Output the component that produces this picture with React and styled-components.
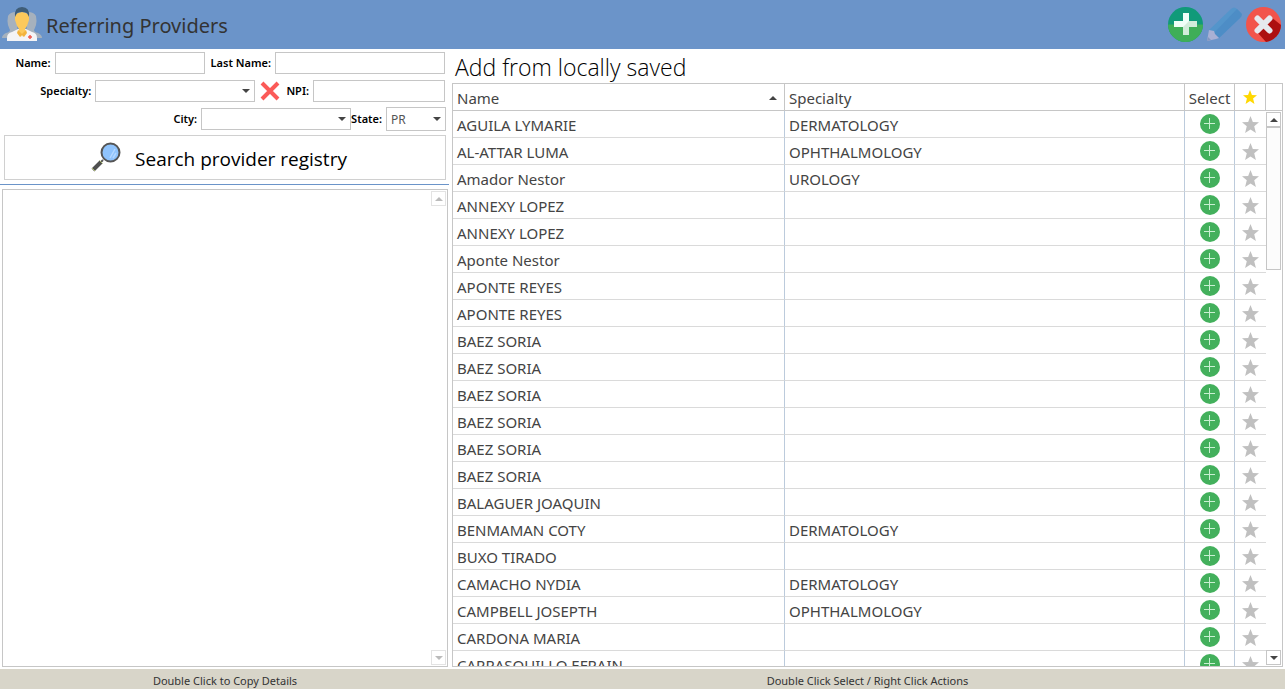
import React from 'react';
import styled, { createGlobalStyle } from 'styled-components';

const GlobalStyle = createGlobalStyle`
  * {
    box-sizing: border-box;
  }
  body {
    margin: 0;
    background: #fff;
    color: #444;
    font-family: 'Noto Sans', 'Open Sans', sans-serif;
    font-size: 15px;
  }
  button, input, select {
    font-family: inherit;
  }
`;

const Page = styled.div`
  height: 100vh;
  display: flex;
  flex-direction: column;
  overflow: hidden;
`;

const Header = styled.header`
  flex: none;
  height: 49px;
  padding: 0 4px 0 2px;
  display: flex;
  align-items: center;
  background: #6b94c9;
`;

const Title = styled.h1`
  flex: 1;
  margin: 0 0 0 4px;
  font-size: 20px;
  line-height: 28px;
  padding-top: 2px;
  font-weight: 400;
  color: #333;
`;

const Toolbar = styled.div`
  display: flex;
  gap: 4px;
`;

const IconButton = styled.button`
  display: flex;
  align-items: center;
  justify-content: center;
  padding: 0;
  border: 0;
  background: none;
  cursor: pointer;
  svg {
    display: block;
  }
`;

const Main = styled.main`
  flex: 1;
  min-height: 0;
  display: flex;
`;

const SearchPanel = styled.section`
  flex: none;
  width: 450px;
  display: flex;
  flex-direction: column;
`;

const SearchForm = styled.form`
  display: flex;
  flex-direction: column;
  margin-right: 1px;
  padding: 3px 3px 4px 4px;
  border-bottom: 1px solid #6b94c9;
`;

const FieldRow = styled.div`
  display: flex;
  align-items: center;
  justify-content: flex-end;
  height: 22px;
  margin: 0 1px 6px 0;
  &:last-of-type {
    margin: 0 0 5px 0;
  }
`;

const Label = styled.label`
  margin: 0 4px 0 ${(props) => props.$gap || 0}px;
  font-size: 11px;
  line-height: 16px;
  font-weight: 600;
  color: #000;
  white-space: nowrap;
`;

const TextInput = styled.input`
  width: ${(props) => props.$width}px;
  height: 22px;
  padding: 0 4px;
  border: 1px solid #c6c6c6;
  border-radius: 0;
  background: #fff;
  font-size: 12px;
`;

const SelectBox = styled.div`
  position: relative;
  width: ${(props) => props.$width}px;
  svg {
    position: absolute;
    top: 50%;
    right: 5px;
    margin-top: -2px;
    pointer-events: none;
  }
`;

const SelectInput = styled.select`
  display: block;
  appearance: none;
  width: 100%;
  height: ${(props) => (props.$tall ? 24 : 22)}px;
  padding: 0 4px;
  border: 1px solid #c6c6c6;
  border-radius: 0;
  background: #fff;
  color: #555;
  font-size: 12px;
`;

const ClearButton = styled(IconButton)`
  margin: 0 6px 0 5px;
`;

const SearchButton = styled.button`
  display: flex;
  align-items: center;
  justify-content: center;
  gap: 14px;
  height: 45px;
  padding: 2px 12px 0 0;
  border: 1px solid #d0d0d0;
  background: #fff;
  font-family: 'Open Sans', sans-serif;
  font-size: 19px;
  color: #000;
  cursor: pointer;
  svg {
    margin-bottom: 4px;
  }
`;

const Results = styled.div`
  flex: 1;
  display: flex;
  justify-content: flex-end;
  margin: 4px 2px 2px 2px;
  border: 1px solid #c6c6c6;
`;

const ScrollBar = styled.div`
  flex: 1;
  display: flex;
  flex-direction: column;
  padding: 1px 1px 1px 0;
`;

const ScrollArrow = styled(IconButton)`
  flex: none;
  width: 15px;
  height: 15px;
  border: 1px solid ${(props) => (props.$disabled ? '#e3e3e3' : '#c6c6c6')};
`;

const ScrollThumb = styled.div`
  flex: none;
  height: 143px;
  border: 1px solid #c6c6c6;
  background: #fcfcfc;
`;

const Spacer = styled.div`
  flex: 1;
`;

const SavedPanel = styled.section`
  flex: 1;
  min-width: 0;
  display: flex;
  flex-direction: column;
  padding: 0 2px 2px 2px;
`;

const SavedTitle = styled.h2`
  margin: 0;
  padding: 2px 0 0 3px;
  font-family: 'Open Sans', sans-serif;
  font-size: 23px;
  line-height: 32px;
  font-weight: 300;
  color: #000;
`;

const Grid = styled.div`
  flex: 1;
  min-height: 0;
  display: flex;
  border: 1px solid #c6c6c6;
`;

const TableClip = styled.div`
  flex: 1;
  min-width: 0;
  overflow: hidden;
`;

const Table = styled.table`
  width: 100%;
  table-layout: fixed;
  border-spacing: 0;
`;

const HeadCell = styled.th`
  width: ${(props) => (props.$width ? `${props.$width}px` : 'auto')};
  height: 27px;
  padding: ${(props) => (props.$center ? '2px 0 0' : '2px 7px 0 4px')};
  border-right: 1px solid #c6c6c6;
  border-bottom: 1px solid #c6c6c6;
  line-height: 22px;
  font-weight: 400;
  text-align: ${(props) => (props.$center ? 'center' : 'left')};
`;

const SortLabel = styled.div`
  display: flex;
  align-items: center;
  justify-content: space-between;
`;

const Cell = styled.td`
  height: 27px;
  padding: 2px 4px 0 4px;
  border-right: 1px solid #bccbdc;
  border-bottom: 1px solid #dadada;
  line-height: 22px;
  white-space: nowrap;
  overflow: hidden;
`;

const IconCell = styled(Cell)`
  padding: 0;
  ${(props) => props.$last && 'border-right: 0;'}
  ${IconButton} {
    margin: 0 auto;
  }
`;

const ScrollColumn = styled.div`
  flex: none;
  width: 16px;
  display: flex;
  flex-direction: column;
`;

const ScrollHead = styled.div`
  flex: none;
  height: 27px;
  border-bottom: 1px solid #c6c6c6;
`;

const Footer = styled.footer`
  flex: none;
  display: flex;
  height: 20px;
  padding-top: 2px;
  background: #d8d5c9;
  font-size: 11px;
  line-height: 20px;
  color: #333;
  text-align: center;
`;

const FooterLeft = styled.div`
  flex: none;
  width: 450px;
`;

const FooterRight = styled.div`
  flex: 1;
`;

const DoctorIcon = () => (
  <svg width="40" height="35" viewBox="0 0 40 35">
    <g fill="#a6b1bd">
      <path d="M14 5Q8 5 6 9q-1 5 0 9 1 3 2 5 0 2-4 3-4 2-4 5h16z" />
      <path d="M26 5q6 0 8 4 1 5 0 9-1 3-2 5 0 2 4 3 4 2 4 5H24z" />
    </g>
    <path d="M5 34v-3q0-5 5-6l6-3h8l6 3q5 1 5 6v3z" fill="#f4f4f6" />
    <path d="M13 8q7-6 14 0v5l-2 6-2 3 1 3-3 5-1-3-1 3-3-5 1-3-2-3-2-6z" fill="#fdc95b" />
    <path d="M16 23l4 4 4-4 1 3-3 4-2-2-2 2-3-4z" fill="#f3b33d" />
    <path d="M13 10q-1-10 7-10t7 10l-2-4q-5-2-10 0z" fill="#3f5d77" />
    <path d="M28 28v4M26 30h4" stroke="#ef5a50" strokeWidth="1.5" />
  </svg>
);

const AddIcon = () => (
  <svg width="35" height="35" viewBox="0 0 35 35">
    <circle cx="17.5" cy="17.5" r="17.5" fill="#109a79" />
    <path d="M0 17.5a17.5 17.5 0 0 0 35 0z" fill="#3fae58" />
    <path d="M15 6h6v8h8v6h-8v8h-6v-8H6v-6h9z" fill="#f0fff8" />
    <path d="M21 14h8v6h-8v8h-6v-8z" fill="#d2ecda" />
  </svg>
);

const PencilIcon = () => (
  <svg width="35" height="35" viewBox="0 0 35 35">
    <path d="M2 23L24 2q3-3 6 0l4 4q2 2-1 5L12 31z" fill="#5495cb" />
    <path d="M6 27L30 2l4 4q2 2-1 5L12 31z" fill="#4d8dc6" />
    <path d="M2 23l5 1 1 3 4 4-3 1-9 2z" fill="#a9b0d4" />
    <path d="M0 34l1-4 3 3z" fill="#8296c0" />
  </svg>
);

const CloseIcon = () => (
  <svg width="35" height="35" viewBox="0 0 35 35">
    <circle cx="17.5" cy="17.5" r="17.5" fill="#f2544b" />
    <path d="M25 10l10 8a17.500 17.500 0 0 1-15 17l-9-10z" fill="#ad1010" />
    <path d="M11.500 11.500l12 12M23.500 11.500l-12 12" stroke="#e6e9ee" strokeWidth="6" strokeLinecap="round" />
  </svg>
);

const ClearIcon = () => (
  <svg width="20" height="20" viewBox="0 0 20 20">
    <path d="M2 2l16 16M18 2L2 18" stroke="#fb5a58" strokeWidth="4" />
  </svg>
);

const MagnifierIcon = () => (
  <svg width="30" height="30" viewBox="0 0 30 30">
    <path d="M12 18l-3 3" stroke="#5a5a5a" strokeWidth="2" />
    <path d="M10 20L2 28" stroke="#505050" strokeWidth="4" />
    <path d="M8.500 18.500l3 3M1 26l3 3" stroke="#a9b86c" strokeWidth="1" />
    <circle cx="19.500" cy="10.500" r="9" fill="#8fc3fc" stroke="#555" strokeWidth="2" />
    <path d="M19 16l5-9M22 16l3-5" stroke="#b5d8ff" strokeWidth="1.500" />
  </svg>
);

const Arrow = ({ up, color = '#444' }) => (
  <svg width="8" height="4" viewBox="0 0 8 4">
    <path d={up ? 'M0 4L4 0l4 4z' : 'M0 0h8L4 4z'} fill={color} />
  </svg>
);

const PlusIcon = () => (
  <svg width="20" height="20" viewBox="0 0 20 20">
    <circle cx="10" cy="10" r="10" fill="#43b05c" />
    <path d="M9.500 4v11M4 9.500h11" stroke="#c9f0d2" strokeWidth="1" />
  </svg>
);

const Star = ({ size, color }) => (
  <svg width={size} height={size} viewBox="0 0 16 16">
    <path d="M8 0l2.200 5.600 5.800.3-4.500 3.800 1.600 6.300L8 12.600 2.900 16l1.600-6.300L0 5.900l5.800-.3z" fill={color} />
  </svg>
);

const providers = [
  ['AGUILA LYMARIE', 'DERMATOLOGY'],
  ['AL-ATTAR LUMA', 'OPHTHALMOLOGY'],
  ['Amador Nestor', 'UROLOGY'],
  ['ANNEXY LOPEZ', ''],
  ['ANNEXY LOPEZ', ''],
  ['Aponte Nestor', ''],
  ['APONTE REYES', ''],
  ['APONTE REYES', ''],
  ['BAEZ SORIA', ''],
  ['BAEZ SORIA', ''],
  ['BAEZ SORIA', ''],
  ['BAEZ SORIA', ''],
  ['BAEZ SORIA', ''],
  ['BAEZ SORIA', ''],
  ['BALAGUER JOAQUIN', ''],
  ['BENMAMAN COTY', 'DERMATOLOGY'],
  ['BUXO TIRADO', ''],
  ['CAMACHO NYDIA', 'DERMATOLOGY'],
  ['CAMPBELL JOSEPTH', 'OPHTHALMOLOGY'],
  ['CARDONA MARIA', ''],
  ['CARRASQUILLO EFRAIN', ''],
];

const ProviderSearch = () => (
  <SearchPanel>
    <SearchForm onSubmit={(e) => e.preventDefault()}>
      <FieldRow>
        <Label htmlFor="name">Name:</Label>
        <TextInput id="name" $width={150} />
        <Label htmlFor="lastName" $gap={6}>Last Name:</Label>
        <TextInput id="lastName" $width={170} />
      </FieldRow>
      <FieldRow>
        <Label htmlFor="specialty">Specialty:</Label>
        <SelectBox $width={160}>
          <SelectInput id="specialty"><option aria-label="Any" /></SelectInput>
          <Arrow />
        </SelectBox>
        <ClearButton type="button" aria-label="Clear specialty"><ClearIcon /></ClearButton>
        <Label htmlFor="npi">NPI:</Label>
        <TextInput id="npi" $width={132} />
      </FieldRow>
      <FieldRow>
        <Label htmlFor="city">City:</Label>
        <SelectBox $width={150}>
          <SelectInput id="city"><option aria-label="Any" /></SelectInput>
          <Arrow />
        </SelectBox>
        <Label htmlFor="state">State:</Label>
        <SelectBox $width={60}>
          <SelectInput id="state" $tall><option>PR</option></SelectInput>
          <Arrow />
        </SelectBox>
      </FieldRow>
      <SearchButton type="submit">
        <MagnifierIcon />
        Search provider registry
      </SearchButton>
    </SearchForm>
    <Results>
      <ScrollColumn>
        <ScrollBar>
          <ScrollArrow $disabled aria-label="Scroll up"><Arrow up color="#bbb" /></ScrollArrow>
          <Spacer />
          <ScrollArrow $disabled aria-label="Scroll down"><Arrow color="#bbb" /></ScrollArrow>
        </ScrollBar>
      </ScrollColumn>
    </Results>
  </SearchPanel>
);

const SavedProviders = () => (
  <SavedPanel>
    <SavedTitle>Add from locally saved</SavedTitle>
    <Grid>
      <TableClip>
        <Table>
          <thead>
            <tr>
              <HeadCell $width={332}>
                <SortLabel>
                  Name
                  <Arrow up />
                </SortLabel>
              </HeadCell>
              <HeadCell>Specialty</HeadCell>
              <HeadCell $width={50} $center>Select</HeadCell>
              <HeadCell $width={31} $center><Star size={14} color="#ffd800" /></HeadCell>
            </tr>
          </thead>
          <tbody>
            {providers.map(([name, specialty], index) => (
              <tr key={index}>
                <Cell>{name}</Cell>
                <Cell>{specialty}</Cell>
                <IconCell>
                  <IconButton aria-label={`Select ${name}`}><PlusIcon /></IconButton>
                </IconCell>
                <IconCell $last>
                  <IconButton aria-label={`Favorite ${name}`}><Star size={17} color="#c0c0c0" /></IconButton>
                </IconCell>
              </tr>
            ))}
          </tbody>
        </Table>
      </TableClip>
      <ScrollColumn>
        <ScrollHead />
        <ScrollBar>
          <ScrollArrow aria-label="Scroll up"><Arrow up /></ScrollArrow>
          <ScrollThumb />
          <Spacer />
          <ScrollArrow aria-label="Scroll down"><Arrow /></ScrollArrow>
        </ScrollBar>
      </ScrollColumn>
    </Grid>
  </SavedPanel>
);

const App = () => (
  <Page>
    <GlobalStyle />
    <Header>
      <DoctorIcon />
      <Title>Referring Providers</Title>
      <Toolbar>
        <IconButton aria-label="Add provider"><AddIcon /></IconButton>
        <IconButton aria-label="Edit provider"><PencilIcon /></IconButton>
        <IconButton aria-label="Close"><CloseIcon /></IconButton>
      </Toolbar>
    </Header>
    <Main>
      <ProviderSearch />
      <SavedProviders />
    </Main>
    <Footer>
      <FooterLeft>Double Click to Copy Details</FooterLeft>
      <FooterRight>Double Click Select / Right Click Actions</FooterRight>
    </Footer>
  </Page>
);

export default App;
